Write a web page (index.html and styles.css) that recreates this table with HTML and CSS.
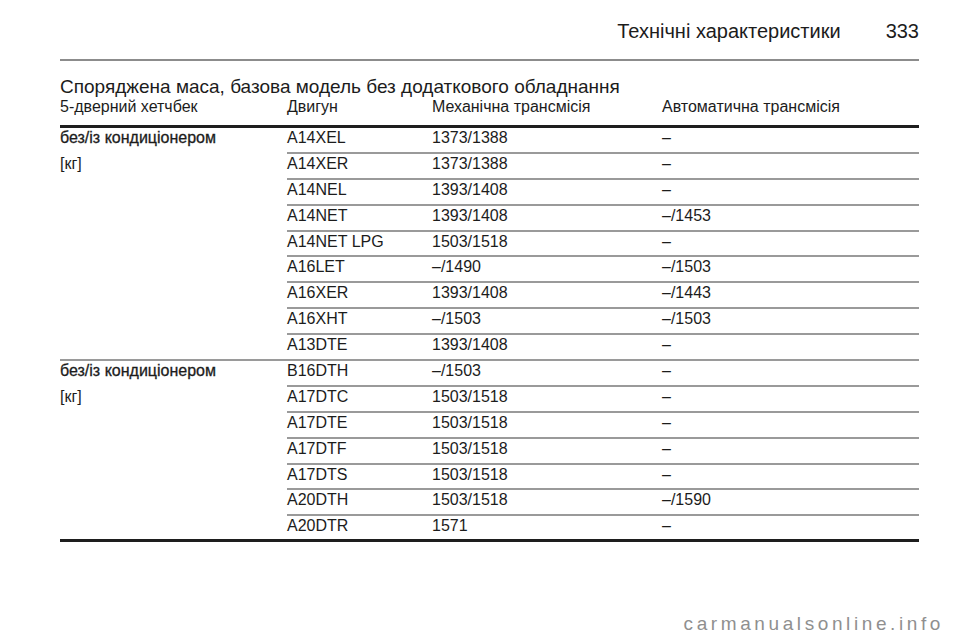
FILE: index.html
```html
<!DOCTYPE html>
<html lang="uk">
<head>
<meta charset="utf-8">
<title>Технічні характеристики 333</title>
<link rel="stylesheet" href="styles.css">
</head>
<body>
<div class="page">
  <header class="running-head">
    <span class="section">Технічні характеристики</span>
    <span class="page-num">333</span>
  </header>
  <h2 class="title">Споряджена маса, базова модель без додаткового обладнання</h2>
  <div class="grid">
    <div class="th">5-дверний хетчбек</div>
    <div class="th">Двигун</div>
    <div class="th">Механічна трансмісія</div>
    <div class="th">Автоматична трансмісія</div>

    <div class="group g9"><div class="gl strong">без/із кондиціонером</div><div class="gl">[кг]</div></div>
    <div class="td">A14XEL</div><div class="td">1373/1388</div><div class="td">–</div>
    <div class="td">A14XER</div><div class="td">1373/1388</div><div class="td">–</div>
    <div class="td">A14NEL</div><div class="td">1393/1408</div><div class="td">–</div>
    <div class="td">A14NET</div><div class="td">1393/1408</div><div class="td">–/1453</div>
    <div class="td">A14NET LPG</div><div class="td">1503/1518</div><div class="td">–</div>
    <div class="td">A16LET</div><div class="td">–/1490</div><div class="td">–/1503</div>
    <div class="td">A16XER</div><div class="td">1393/1408</div><div class="td">–/1443</div>
    <div class="td">A16XHT</div><div class="td">–/1503</div><div class="td">–/1503</div>
    <div class="td">A13DTE</div><div class="td">1393/1408</div><div class="td">–</div>

    <div class="group g7 last"><div class="gl strong">без/із кондиціонером</div><div class="gl">[кг]</div></div>
    <div class="td">B16DTH</div><div class="td">–/1503</div><div class="td">–</div>
    <div class="td">A17DTC</div><div class="td">1503/1518</div><div class="td">–</div>
    <div class="td">A17DTE</div><div class="td">1503/1518</div><div class="td">–</div>
    <div class="td">A17DTF</div><div class="td">1503/1518</div><div class="td">–</div>
    <div class="td">A17DTS</div><div class="td">1503/1518</div><div class="td">–</div>
    <div class="td">A20DTH</div><div class="td">1503/1518</div><div class="td">–/1590</div>
    <div class="td end">A20DTR</div><div class="td end">1571</div><div class="td end">–</div>
  </div>
  <div class="watermark">carmanualsonline.info</div>
</div>
</body>
</html>
```

FILE: styles.css
```css
* { box-sizing: border-box; }
html, body { margin: 0; padding: 0; background: #fff; }
body {
  font-family: "Liberation Sans", Arial, sans-serif;
  color: #1c1c1c;
  width: 960px;
  height: 642px;
  overflow: hidden;
}
.page {
  position: relative;
  width: 960px;
  height: 642px;
  padding: 19px 41px 0 60px;
}
.running-head {
  display: flex;
  justify-content: flex-end;
  gap: 45px;
  font-size: 20px;
  line-height: 24px;
  padding-bottom: 16px;
  border-bottom: 2px solid #8c8c8c;
}
.title {
  margin: 15px 0 0;
  font-size: 19px;
  line-height: 22px;
  font-weight: normal;
}
.grid {
  display: grid;
  grid-template-columns: 227px 145px 230px 257px;
  font-size: 16px;
  line-height: 18px;
}
.th {
  height: 30px;
  border-bottom: 3px solid #1e1e1e;
}
.td {
  height: 25.9px;
  padding-top: 1px;
  border-bottom: 2px solid #9a9a9a;
}
.td.end { border-bottom: 3px solid #1e1e1e; }
.group { grid-column: 1; }
.g9 { grid-row: span 9; border-bottom: 2px solid #9a9a9a; }
.g7 { grid-row: span 7; border-bottom: 3px solid #1e1e1e; }
.gl { height: 25.9px; padding-top: 1px; }
.strong { -webkit-text-stroke: 0.3px #1c1c1c; }
.watermark {
  position: absolute;
  right: 16px;
  top: 613px;
  font-size: 19px;
  line-height: 22px;
  letter-spacing: 3.6px;
  color: #8f8f8f;
}
```
